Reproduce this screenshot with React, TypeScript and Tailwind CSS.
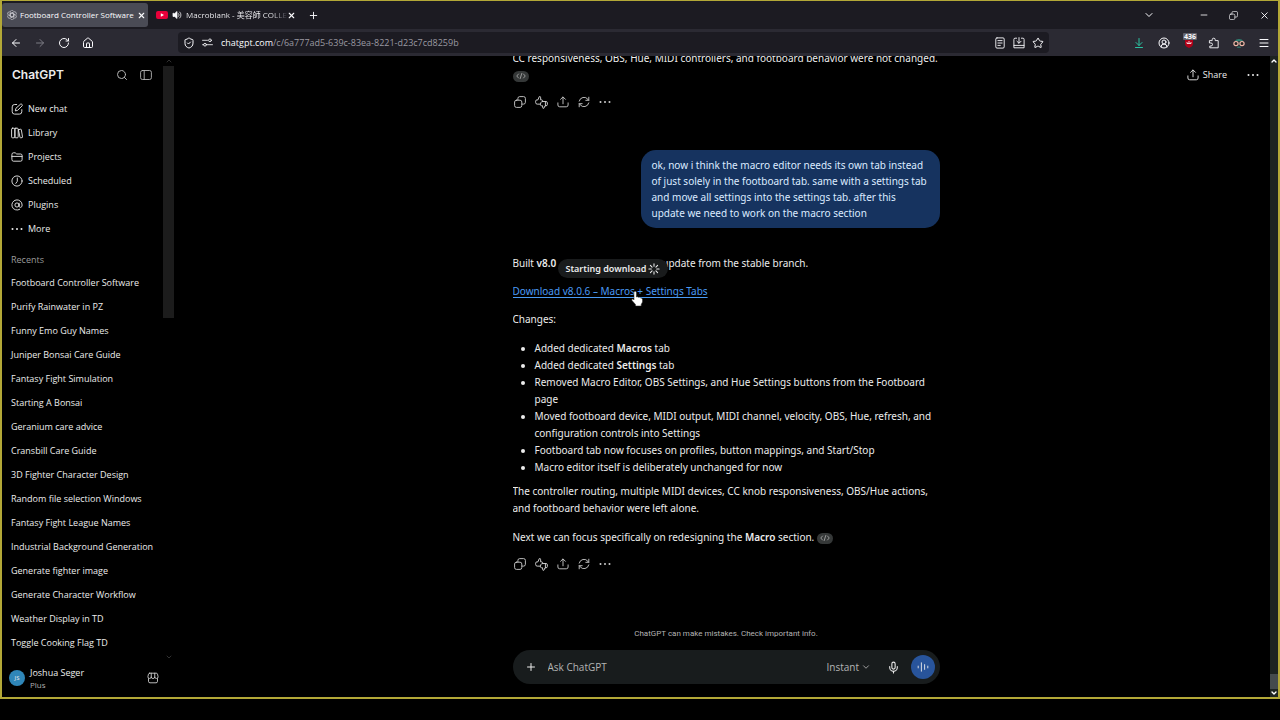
import React from 'react';
import {
  ArrowDownToLine,
  ArrowLeft,
  ArrowRight,
  ChevronDown,
  ChevronUp,
  CircleUserRound,
  House,
  Menu,
  Mic,
  Minus,
  Plus,
  RotateCw,
  Search,
  ShieldCheck,
  Star,
  X,
} from 'lucide-react';

type IconProps = { size?: number; className?: string; children?: React.ReactNode; width?: number };

const Svg = ({ size = 12, className = '', children, width = 1.5 }: IconProps) => (
  <svg
    width={size}
    height={size}
    viewBox="0 0 20 20"
    fill="none"
    stroke="currentColor"
    strokeWidth={width}
    strokeLinecap="round"
    strokeLinejoin="round"
    className={`shrink-0 ${className}`}
    aria-hidden="true"
  >
    {children}
  </svg>
);

const PenIcon = () => (
  <Svg>
    <path d="M9.500 2.500H6A4 4 0 0 0 2 6.500v8a4 4 0 0 0 4 4h8a4 4 0 0 0 4-4V11" />
    <path d="M16.500 1.800a1.900 1.900 0 0 1 2 3L11 12.300 7.200 13.200 8 9.500z" />
  </Svg>
);

const LibraryIcon = () => (
  <Svg>
    <rect x="1" y="2" width="5.500" height="16" rx="1.500" />
    <rect x="6.500" y="2" width="5.500" height="16" rx="1.500" />
    <path d="M12.500 4.500l3.500-.8a1 1 0 0 1 1.200.8l2 12a1 1 0 0 1-.8 1.200l-2.200.3a1 1 0 0 1-1.200-.8L12.500 5" />
  </Svg>
);

const FolderIcon = () => (
  <Svg>
    <path d="M1.500 5.500a2.500 2.500 0 0 1 2.500-2.500h3l2.500 2H16a2.500 2.500 0 0 1 2.500 2.500v7A2.500 2.500 0 0 1 16 17H4a2.500 2.500 0 0 1-2.500-2.500z" />
    <path d="M1.500 9h17" />
  </Svg>
);

const ClockIcon = () => (
  <Svg>
    <circle cx="10" cy="10" r="8.500" />
    <path d="M10.500 5v5.500L8 14" />
  </Svg>
);

const PluginIcon = () => (
  <Svg>
    <path d="M14.500 17.200A8.500 8.500 0 1 1 18.500 10c0 2.500-1 4-2.700 4-1.500 0-2.300-1-2.300-2.500V7" />
    <circle cx="10" cy="10" r="3.500" />
  </Svg>
);

const DotsIcon = ({ size = 12 }: IconProps) => (
  <Svg size={size}>
    <g fill="currentColor" stroke="none">
      <circle cx="2.500" cy="10" r="1.700" />
      <circle cx="10" cy="10" r="1.700" />
      <circle cx="17.500" cy="10" r="1.700" />
    </g>
  </Svg>
);

const PanelIcon = () => (
  <Svg>
    <rect x="1" y="2.500" width="18" height="15" rx="3" />
    <path d="M7 2.500v15" />
  </Svg>
);

const UploadIcon = () => (
  <Svg>
    <path d="M10 13V2M6 5.500 10 1.500l4 4M1.500 11.500v3.500a3 3 0 0 0 3 3h11a3 3 0 0 0 3-3v-3.500" />
  </Svg>
);

const CopyIcon = ({ size = 12 }: IconProps) => (
  <Svg size={size}>
    <rect x="1" y="7" width="12" height="12" rx="3" />
    <path d="M6.500 6.500V4a3 3 0 0 1 3-3H16a3 3 0 0 1 3 3v6.500a3 3 0 0 1-3 3h-2.500" />
  </Svg>
);

const ThumbsIcon = () => (
  <Svg size={13}>
    <path d="M8 12.500H3.500A2.500 2.500 0 0 1 1 10V8a2 2 0 0 1 2-2h1.500L6.500 1a1.700 1.700 0 0 1 2.200 1.700V6h1.500a2 2 0 0 1 1.900 2" />
    <path d="M16 8.500v6.500" />
    <path d="M11.500 8.500h5.500a2 2 0 0 1 2 2v2.500a2 2 0 0 1-2 2h-1.500L13.500 19a1.600 1.600 0 0 1-1.800-1.700V15H10a2 2 0 0 1-1.700-2.300l.7-2.500a2.500 2.500 0 0 1 2.500-1.700z" />
  </Svg>
);

const RefreshIcon = () => (
  <Svg>
    <path d="M2 8.500A8.200 8.200 0 0 1 16.500 5.500l1.500 1.700M18 2v5.200h-5M18 11.500A8.200 8.200 0 0 1 3.500 14.500L2 12.800M2 18v-5.200h5" />
  </Svg>
);

const StoreIcon = () => (
  <Svg>
    <path d="M4.500 2h11a2 2 0 0 1 2 1.500l1 4.500a2.800 2.800 0 0 1-5.600 0 2.900 2.900 0 0 1-5.800 0 2.800 2.800 0 0 1-5.600 0l1-4.500a2 2 0 0 1 2-1.500zM7.100 8V2M12.900 8V2M2.500 11v4.500A2.500 2.500 0 0 0 5 18h10a2.500 2.500 0 0 0 2.500-2.500V11" />
  </Svg>
);

const OpenAiIcon = () => (
  <Svg size={10} width={1.300} className="text-[#d0d0d6]">
    {[0, 60, 120, 180, 240, 300].map((deg) => (
      <path key={deg} transform={`rotate(${deg} 10 10)`} d="M10 5.800 6.500 7.800V3.800a3.500 3.500 0 0 1 6.500-1.600M10 5.800l3.600 2.100" />
    ))}
  </Svg>
);

const VoiceIcon = () => (
  <Svg>
    <path d="M2 8.500v3M7.300 3v14M12.700 6v8M18 8.500v3" />
  </Svg>
);

const SpinnerIcon = () => (
  <Svg width={1.800}>
    <path d="M10 1.500v4M10 14.500v4M1.500 10h4M14.500 10h4M4 4l2.800 2.800M13.200 13.200 16 16M4 16l2.800-2.800M13.200 6.800 16 4" />
  </Svg>
);

const navItems = [
  { label: 'New chat', icon: PenIcon },
  { label: 'Library', icon: LibraryIcon },
  { label: 'Projects', icon: FolderIcon },
  { label: 'Scheduled', icon: ClockIcon },
  { label: 'Plugins', icon: PluginIcon },
  { label: 'More', icon: DotsIcon },
];

const recents = [
  'Footboard Controller Software',
  'Purify Rainwater in PZ',
  'Funny Emo Guy Names',
  'Juniper Bonsai Care Guide',
  'Fantasy Fight Simulation',
  'Starting A Bonsai',
  'Geranium care advice',
  'Cransbill Care Guide',
  '3D Fighter Character Design',
  'Random file selection Windows',
  'Fantasy Fight League Names',
  'Industrial Background Generation',
  'Generate fighter image',
  'Generate Character Workflow',
  'Weather Display in TD',
  'Toggle Cooking Flag TD',
];

const TabBar = () => (
  <div className="flex h-7 shrink-0 items-center bg-[#1c1b22] text-[8px] text-[#fbfbfe]">
    <button className="flex h-6 w-[146px] items-center gap-[3px] rounded-[3px] bg-[#4a4b55] px-[5px] whitespace-nowrap">
      <OpenAiIcon />
      <span className="flex-1 text-left">Footboard Controller Software</span>
      <X size={9} strokeWidth={3} className="shrink-0" />
    </button>
    <button className="flex h-6 w-[148px] items-center pr-1 pl-2 whitespace-nowrap">
      <svg width="12" height="8" viewBox="0 0 12 8" className="shrink-0" aria-hidden="true">
        <rect width="12" height="8" rx="2" fill="#e8003a" />
        <path d="M4.800 2.200v3.600L8 4z" fill="#fff" />
      </svg>
      <Svg size={10} className="ml-1">
        <path d="M2 7v6h3.500L10 17V3L5.500 7z" fill="currentColor" />
        <path d="M13 7a4 4 0 0 1 0 6M15.500 4a8 8 0 0 1 0 12" />
      </Svg>
      <span className="ml-1 flex-1 bg-linear-to-r from-[#fbfbfe] from-85% to-[#3a3942] bg-clip-text text-left text-transparent">
        Macroblank - 美容師 COLLE
      </span>
      <X size={9} strokeWidth={3} className="shrink-0" />
    </button>
    <button aria-label="New tab" className="ml-3"><Plus size={11} /></button>
    <div className="ml-auto flex items-center pr-2">
      <button aria-label="List all tabs" className="mr-11"><ChevronDown size={12} /></button>
      <button aria-label="Minimize" className="mr-5"><Minus size={10} /></button>
      <button aria-label="Restore" className="mr-[21px]"><CopyIcon size={9} /></button>
      <button aria-label="Close"><X size={11} /></button>
    </div>
  </div>
);

const Toolbar = () => (
  <div className="flex h-[27px] shrink-0 items-center bg-[#2b2a33] px-2 text-[#fbfbfe]">
    <div className="flex w-[168px] shrink-0 items-center gap-3">
      <button aria-label="Back"><ArrowLeft size={12} /></button>
      <button aria-label="Forward" className="text-[#7d7c85]"><ArrowRight size={12} /></button>
      <button aria-label="Reload"><RotateCw size={12} /></button>
      <button aria-label="Home"><House size={12} /></button>
    </div>
    <div className="flex h-[21px] flex-1 items-center rounded-[4px] bg-[#1c1b22] px-[5px]">
      <ShieldCheck size={12} />
      <Svg className="ml-[7px]" size={11}>
        <path d="M1 6h9M9 14h10M1 14h2" />
        <circle cx="14.500" cy="6" r="2.500" />
        <circle cx="5.500" cy="14" r="2.500" />
      </Svg>
      <p className="ml-2 flex-1 text-[9px] text-[#9a99a1]">
        <span className="text-[#fbfbfe]">chatgpt.com</span>/c/6a777ad5-639c-83ea-8221-d23c7cd8259b
      </p>
      <div className="flex items-center gap-[7px]">
        <Svg size={12}>
          <rect x="3" y="1.500" width="14" height="17" rx="2" />
          <path d="M6.500 6h7M6.500 10h7M6.500 14h4" />
        </Svg>
        <Svg size={12}>
          <path d="M6 2H3.500A2 2 0 0 0 1.500 4v10h17V4a2 2 0 0 0-2-2H14M10 1v9M6.500 7l3.500 3.500L13.500 7M1.500 14v4h17v-4" />
        </Svg>
        <Star size={12} />
      </div>
    </div>
    <div className="ml-[84px] flex items-center gap-[13px]">
      <ArrowDownToLine size={12} className="text-[#2ac3a2]" />
      <CircleUserRound size={12} />
      <div className="relative h-3 w-3">
        <svg width="12" height="12" viewBox="0 0 12 12" aria-hidden="true">
          <path d="M2 3h8v4c0 2-2 3-4 4-2-1-4-2-4-4z" fill="#b00018" />
          <path d="M4 5v1.500h4V5M6 4v2.500" fill="none" stroke="#fff" strokeWidth=".8" />
        </svg>
        <span className="absolute -top-1 left-0 rounded-[1px] bg-[#63636d] px-px text-[7px] leading-[7px] font-bold">436</span>
      </div>
      <Svg>
        <path d="M3 6h4V4.500a2.500 2.500 0 0 1 5 0V6h5v12H3v-3h2a2 2 0 0 0 0-5H3z" />
      </Svg>
      <svg width="12" height="12" viewBox="0 0 20 20" aria-hidden="true">
        <path d="M3 7c2-5 12-5 14 0z" fill="#2f7f72" />
        <circle cx="5" cy="11" r="3.500" fill="#222" stroke="#f0b8a8" strokeWidth="2" />
        <circle cx="15" cy="11" r="3.500" fill="#222" stroke="#f0b8a8" strokeWidth="2" />
        <path d="M7 17h6" stroke="#2f7f72" strokeWidth="2" />
      </svg>
      <button aria-label="Menu"><Menu size={12} /></button>
    </div>
  </div>
);

const Sidebar = () => (
  <aside className="flex w-[172px] shrink-0">
    <div className="flex min-w-0 flex-1 flex-col text-[9px] text-[#ececec]">
      <header className="flex items-center gap-3 pt-[10px] pr-[11px] pl-[10px]">
        <h1 className="flex-1 font-[Inter] text-[12px] leading-[18px] font-semibold">ChatGPT</h1>
        <button aria-label="Search" className="text-[#b4b4b4]"><Search size={12} /></button>
        <button aria-label="Toggle sidebar" className="text-[#b4b4b4]"><PanelIcon /></button>
      </header>
      <nav className="mt-[13px] flex flex-col pl-[9px]">
        {navItems.map((item) => (
          <button key={item.label} className="flex h-6 items-center gap-[5px]">
            <item.icon />
            {item.label}
          </button>
        ))}
      </nav>
      <h2 className="mt-3 pl-[9px] leading-[14px] text-[#9b9b9b]">Recents</h2>
      <ul className="mt-1 min-h-0 flex-1 overflow-hidden whitespace-nowrap">
        {recents.map((title) => (
          <li key={title}>
            <a href="#" className="flex h-6 items-center pl-[9px]">{title}</a>
          </li>
        ))}
      </ul>
      <footer className="flex h-[38px] items-center gap-[5px] pr-[4px] pl-[7px]">
        <span className="flex h-4 w-4 items-center justify-center rounded-full bg-[#2f86b8] text-[6px]">JS</span>
        <div className="flex-1">
          <p className="leading-[13px]">Joshua Seger</p>
          <p className="text-[8px] leading-[11px] text-[#afafaf]">Plus</p>
        </div>
        <button aria-label="Apps" className="text-[#cdcdcd]"><StoreIcon /></button>
      </footer>
    </div>
    <div className="mb-9 flex w-[11px] flex-col items-center text-[#4a4a4a]">
      <ChevronUp size={8} className="my-px" />
      <div className="h-[252px] w-full bg-[#1c1c1c]" />
      <ChevronDown size={8} className="mt-auto" />
    </div>
  </aside>
);

const CodeBadge = () => (
  <span className="inline-flex h-[11px] w-4 items-center justify-center rounded-full bg-[#353838] align-middle text-[#b9b9b9]">
    <Svg size={10}>
      <path d="M5 6 1.500 10 5 14M15 6l3.500 4-3.500 4M11.500 5l-3 10" />
    </Svg>
  </span>
);

const MessageActions = () => (
  <div className="mt-3 flex h-3 items-center gap-[9px] pl-px text-[#cdcdcd]">
    <button aria-label="Copy"><CopyIcon /></button>
    <button aria-label="Rate"><ThumbsIcon /></button>
    <button aria-label="Share message"><UploadIcon /></button>
    <button aria-label="Regenerate"><RefreshIcon /></button>
    <button aria-label="More actions"><DotsIcon /></button>
  </div>
);

const Conversation = () => (
  <div className="flex min-h-0 flex-1 flex-col justify-end overflow-hidden pb-[57px] font-['Noto_Sans',sans-serif] text-[10px] leading-[17px] text-[#ececec]">
    <p>CC responsiveness, OBS, Hue, MIDI controllers, and footboard behavior were not changed.</p>
    <div className="h-[17px]"><CodeBadge /></div>
    <MessageActions />

    <div className="mt-[42px] w-[299px] self-end rounded-[15px] bg-[#16335f] px-[11px] py-[7px] leading-4 text-[#dcebff]">
      ok, now i think the macro editor needs its own tab instead of just solely in the footboard tab. same with a
      settings tab and move all settings into the settings tab. after this update we need to work on the macro section
    </div>

    <div className="relative mt-[27px]">
      <p>
        Built <b className="font-semibold">v8.0</b>
        <span className="inline-block w-[106px]" />
        update from the stable branch.
      </p>
      <div className="absolute top-1 left-[45px] flex h-[19px] items-center gap-[2px] rounded-full bg-[#191b1c] px-2 text-[9px] font-semibold whitespace-nowrap">
        Starting download
        <SpinnerIcon />
      </div>
    </div>
    <div className="relative mt-[11px]">
      <a href="#" className="text-[#4a9bf5] underline underline-offset-2">Download v8.0.6 – Macros + Settings Tabs</a>
      <svg width="12" height="16" viewBox="0 0 12 16" className="absolute top-2 left-[118px]" aria-hidden="true">
        <path
          d="M3 1.500a1.200 1.200 0 0 1 2.400 0V6l1.200-.2 1 .6 1.200-.1.900.7 1.200.2.600 1.200V11l-1.300 2.500V15H4.500v-1.500L1 9.500c-.7-1 .5-2 1.400-1.200L3 9z"
          fill="#fff"
          stroke="#222"
          strokeWidth=".5"
        />
      </svg>
    </div>
    <p className="mt-[11px]">Changes:</p>
    <ul className="mt-3 mb-[7px] list-disc pl-[22px]">
      <li>Added dedicated <b className="font-semibold">Macros</b> tab</li>
      <li>Added dedicated <b className="font-semibold">Settings</b> tab</li>
      <li>Removed Macro Editor, OBS Settings, and Hue Settings buttons from the Footboard page</li>
      <li>Moved footboard device, MIDI output, MIDI channel, velocity, OBS, Hue, refresh, and configuration controls into Settings</li>
      <li>Footboard tab now focuses on profiles, button mappings, and Start/Stop</li>
      <li>Macro editor itself is deliberately unchanged for now</li>
    </ul>
    <p>The controller routing, multiple MIDI devices, CC knob responsiveness, OBS/Hue actions, and footboard behavior were left alone.</p>
    <p className="mt-3">
      Next we can focus specifically on redesigning the <b className="font-semibold">Macro</b> section. <CodeBadge />
    </p>
    <MessageActions />
  </div>
);

const Composer = () => (
  <form className="flex h-[34px] shrink-0 items-center rounded-full bg-[#181c1d] pr-[5px] pl-3 text-[10px] text-[#ececec]">
    <button type="button" aria-label="Add files"><Plus size={12} /></button>
    <input
      aria-label="Ask ChatGPT"
      placeholder="Ask ChatGPT"
      className="ml-[11px] min-w-0 flex-1 bg-transparent outline-none placeholder:text-[#b4b4b4]"
    />
    <label className="flex items-center text-[#b4b4b4]">
      <select aria-label="Model" className="appearance-none bg-transparent pr-px outline-none">
        <option>Instant</option>
      </select>
      <ChevronDown size={10} />
    </label>
    <button type="button" aria-label="Dictate" className="ml-4"><Mic size={13} /></button>
    <button type="button" aria-label="Voice mode" className="ml-[11px] flex h-6 w-6 items-center justify-center rounded-full bg-[#28549b]">
      <VoiceIcon />
    </button>
  </form>
);

const App = () => (
  <div className="flex h-screen flex-col bg-black pb-[21px] font-['Open_Sans','Noto_Sans_CJK_JP',sans-serif]">
    <div className="flex min-h-0 flex-1 flex-col border-2 border-t border-[#b3a837]">
      <TabBar />
      <Toolbar />
      <div className="flex min-h-0 flex-1">
        <Sidebar />
        <main className="relative flex min-w-0 flex-1 justify-center">
          <div className="flex w-[427px] flex-col pb-[13px]">
            <Conversation />
            <p className="mb-[9px] text-center font-[Roboto] text-[8px] leading-[14px] text-[#b4b4b4]">
              ChatGPT can make mistakes. Check important info.
            </p>
            <Composer />
          </div>
          <div className="absolute top-[10px] right-[19px] flex h-[18px] items-center gap-5 text-[9px] text-[#ececec]">
            <button className="flex items-center gap-1"><UploadIcon />Share</button>
            <button aria-label="Conversation options"><DotsIcon /></button>
          </div>
          <div className="absolute inset-y-0 right-0 flex w-2 flex-col items-center justify-between bg-[#1d2321] text-white">
            <ChevronUp size={8} strokeWidth={4} className="mt-px" />
            <div className="mt-auto h-[15px] w-full bg-[#454b4d]" />
            <ChevronDown size={8} strokeWidth={4} />
          </div>
        </main>
      </div>
    </div>
  </div>
);

export default App;
